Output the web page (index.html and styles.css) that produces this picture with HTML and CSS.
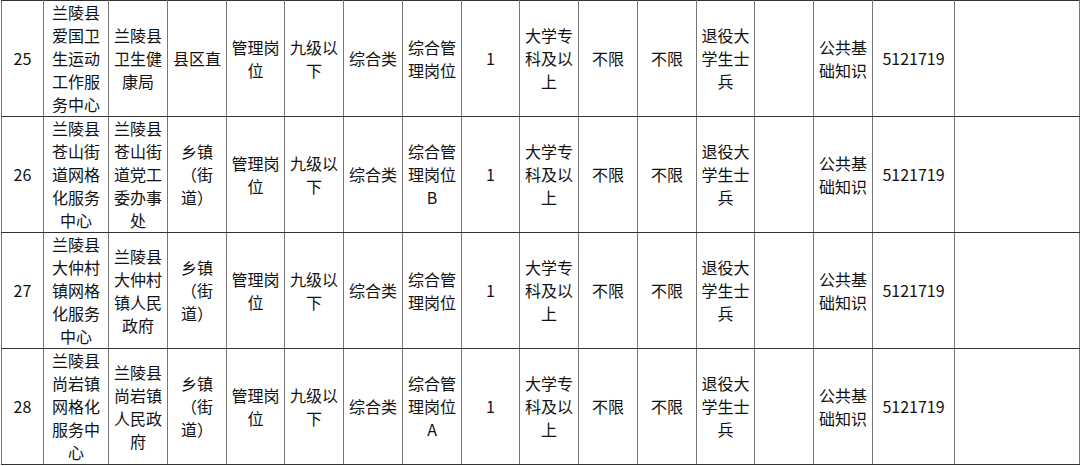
FILE: index.html
```html
<!DOCTYPE html>
<html lang="zh-CN">
<head>
<meta charset="utf-8">
<title>岗位表</title>
<link rel="stylesheet" href="styles.css">
</head>
<body>
<table class="grid">
  <colgroup>
    <col class="c42"><col class="c65"><col class="c59"><col class="c59"><col class="c58"><col class="c59"><col class="c59"><col class="c59"><col class="c58"><col class="c59"><col class="c59"><col class="c59"><col class="c58"><col class="c59"><col class="c59"><col class="c82"><col class="c125">
  </colgroup>
  <tbody>
    <tr>
      <td>25</td>
      <td>兰陵县爱国卫生运动工作服务中心</td>
      <td>兰陵县卫生健康局</td>
      <td>县区直</td>
      <td>管理岗位</td>
      <td>九级以下</td>
      <td>综合类</td>
      <td>综合管理岗位</td>
      <td>1</td>
      <td>大学专科及以上</td>
      <td>不限</td>
      <td>不限</td>
      <td>退役大学生士兵</td>
      <td></td>
      <td>公共基础知识</td>
      <td>5121719</td>
      <td></td>
    </tr>
    <tr>
      <td>26</td>
      <td>兰陵县苍山街道网格化服务中心</td>
      <td>兰陵县苍山街道党工委办事处</td>
      <td>乡镇（街道）</td>
      <td>管理岗位</td>
      <td>九级以下</td>
      <td>综合类</td>
      <td>综合管理岗位B</td>
      <td>1</td>
      <td>大学专科及以上</td>
      <td>不限</td>
      <td>不限</td>
      <td>退役大学生士兵</td>
      <td></td>
      <td>公共基础知识</td>
      <td>5121719</td>
      <td></td>
    </tr>
    <tr>
      <td>27</td>
      <td>兰陵县大仲村镇网格化服务中心</td>
      <td>兰陵县大仲村镇人民政府</td>
      <td>乡镇（街道）</td>
      <td>管理岗位</td>
      <td>九级以下</td>
      <td>综合类</td>
      <td>综合管理岗位</td>
      <td>1</td>
      <td>大学专科及以上</td>
      <td>不限</td>
      <td>不限</td>
      <td>退役大学生士兵</td>
      <td></td>
      <td>公共基础知识</td>
      <td>5121719</td>
      <td></td>
    </tr>
    <tr>
      <td>28</td>
      <td>兰陵县尚岩镇网格化服务中心</td>
      <td>兰陵县尚岩镇人民政府</td>
      <td>乡镇（街道）</td>
      <td>管理岗位</td>
      <td>九级以下</td>
      <td>综合类</td>
      <td>综合管理岗位A</td>
      <td>1</td>
      <td>大学专科及以上</td>
      <td>不限</td>
      <td>不限</td>
      <td>退役大学生士兵</td>
      <td></td>
      <td>公共基础知识</td>
      <td>5121719</td>
      <td></td>
    </tr>
  </tbody>
</table>
</body>
</html>
```

FILE: styles.css
```css
html, body {
  margin: 0;
  padding: 0;
  background: #ffffff;
}

body {
  padding-left: 1px;
  font-family: "Noto Sans CJK SC", "Noto Sans", sans-serif;
  font-size: 16px;
  line-height: 23px;
  color: #111111;
}

.grid {
  border-collapse: collapse;
  table-layout: fixed;
  width: 1078px;
}

.grid tr {
  height: 116px;
}

.grid td {
  border-top: 1px solid #333333;
  border-bottom: 1px solid #333333;
  border-left: 1px solid #777777;
  border-right: 1px solid #777777;
  padding: 0 3px;
  text-align: center;
  vertical-align: middle;
  word-break: break-all;
}

.c42 { width: 42px; }
.c58 { width: 58px; }
.c59 { width: 59px; }
.c65 { width: 65px; }
.c82 { width: 82px; }
.c125 { width: 125px; }
```
